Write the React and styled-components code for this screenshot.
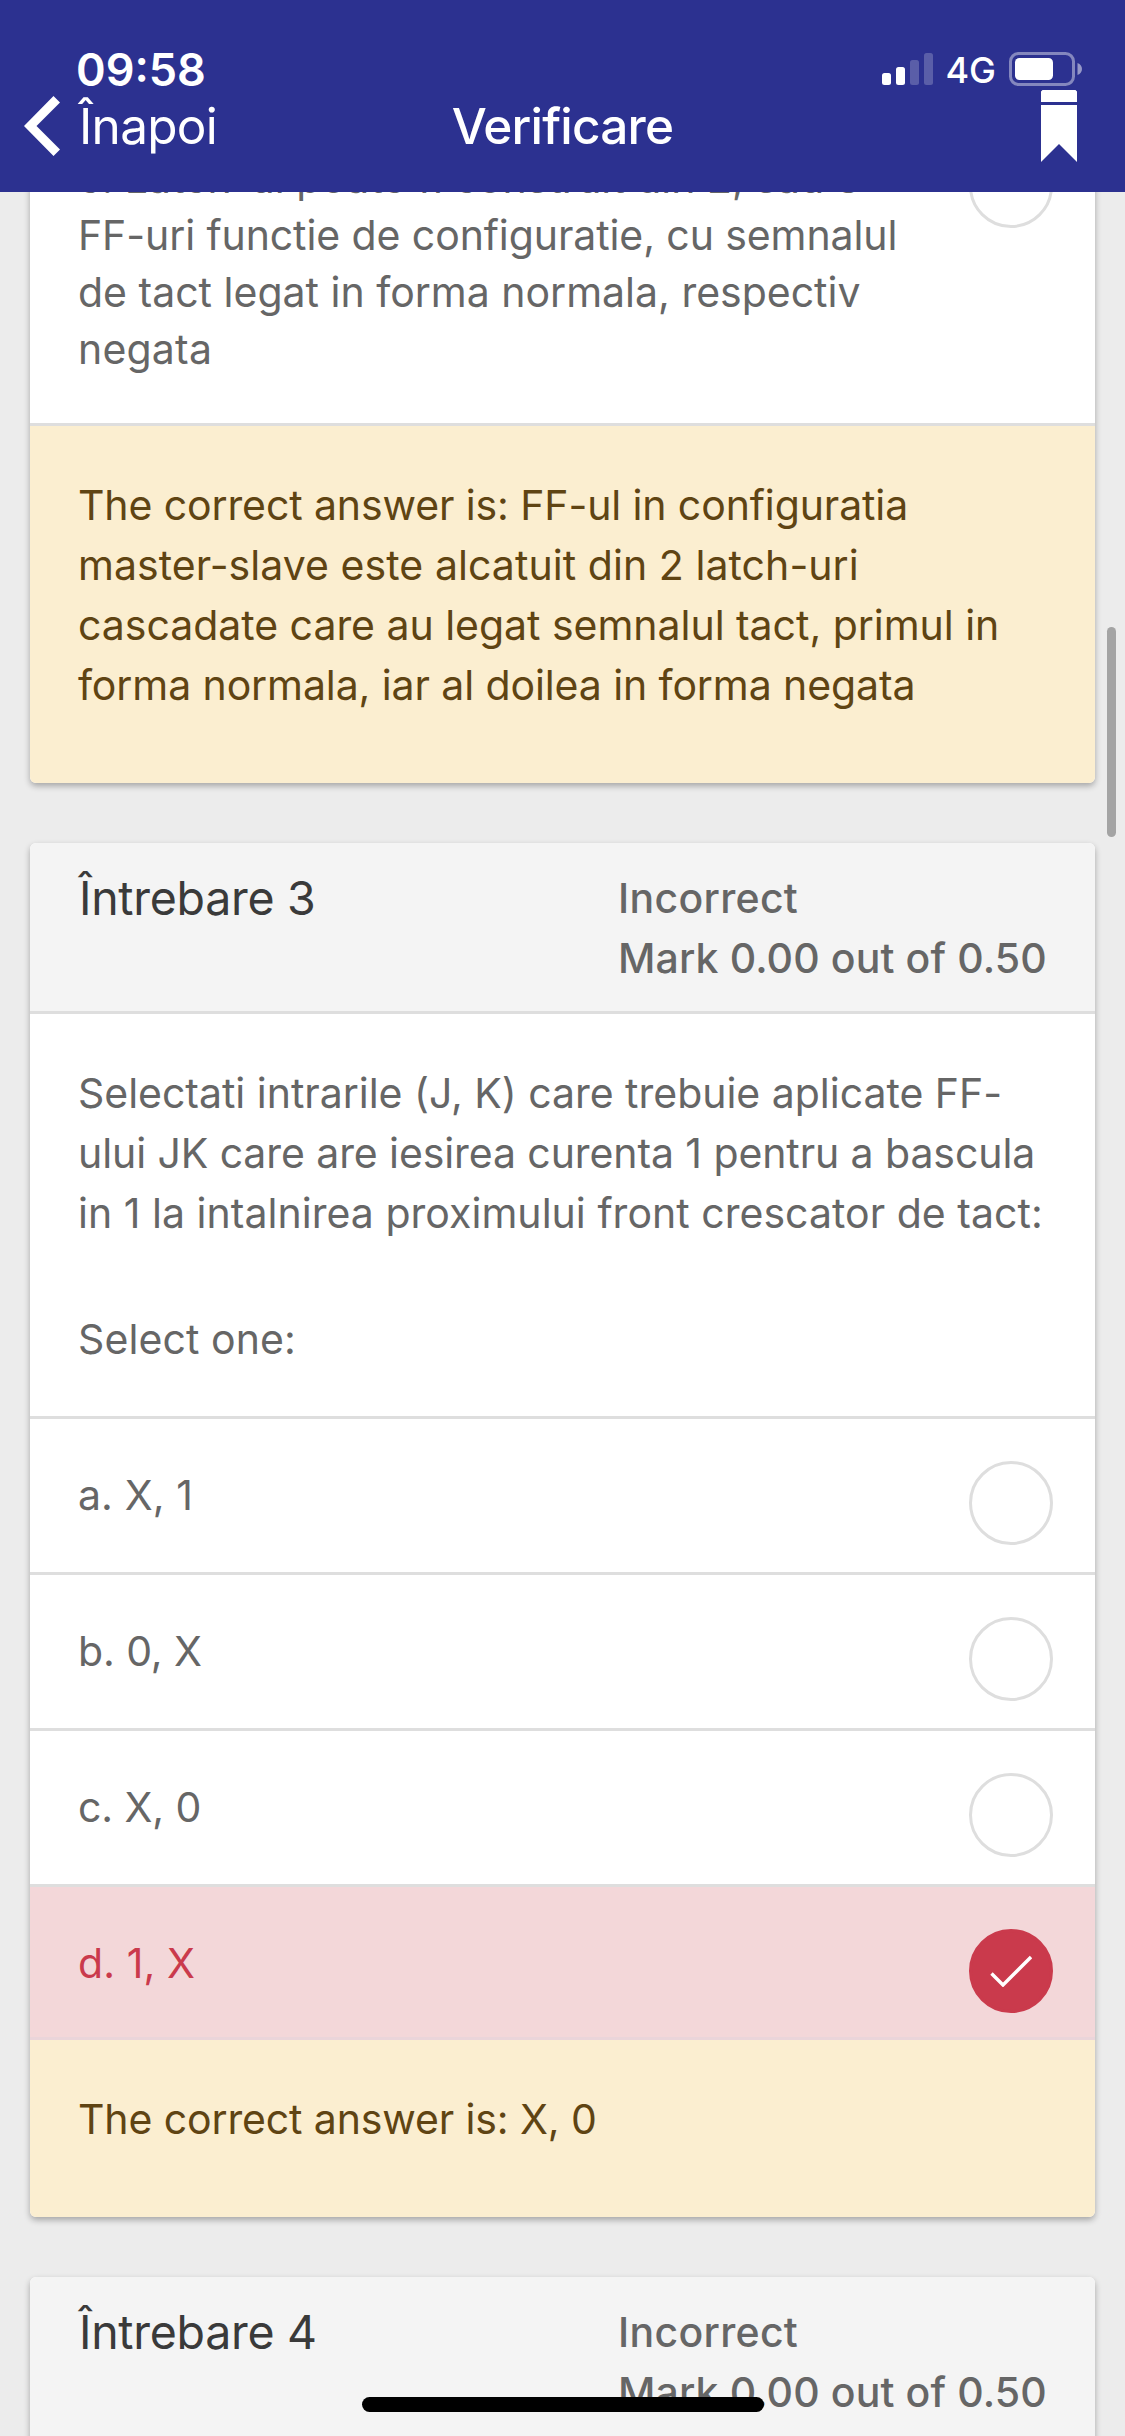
import React from 'react';
import styled, { createGlobalStyle } from 'styled-components';

const GlobalStyle = createGlobalStyle`
  * { box-sizing: border-box; }
  body {
    margin: 0;
    background: #ececec;
    font-family: Inter, 'Liberation Sans', sans-serif;
  }
`;

const Screen = styled.div`
  position: relative;
  display: flex;
  flex-direction: column;
  width: 1125px;
  height: 2436px;
  overflow: hidden;
  background: #ececec;
`;

const Header = styled.header`
  flex: none;
  height: 192px;
  background: #2c3190;
  color: #fff;
`;

const StatusBar = styled.div`
  display: flex;
  justify-content: space-between;
  align-items: center;
  height: 90px;
  padding: 48px 43px 0 76px;
`;

const Clock = styled.span`
  padding-top: 2px;
  font-size: 45px;
  font-weight: 600;
  line-height: 42px;
`;

const Indicators = styled.div`
  display: flex;
  align-items: center;
`;

const Network = styled.span`
  margin-left: 12px;
  margin-right: 13px;
  padding-top: 3px;
  font-size: 36px;
  font-weight: 500;
  line-height: 39px;
`;

const NavBar = styled.nav`
  display: grid;
  grid-template-columns: 300px 1fr 300px;
  height: 102px;
  padding: 6px 48px 0 24px;
`;

const BackButton = styled.button`
  display: flex;
  gap: 19px;
  height: 60px;
  padding: 0;
  border: 0;
  background: none;
  color: inherit;
  font: 400 49.5px/60px Inter, 'Liberation Sans', sans-serif;
  letter-spacing: -0.7px;
`;

const Title = styled.h1`
  margin: 0;
  padding-left: 24px;
  font-size: 49.5px;
  font-weight: 550;
  line-height: 60px;
  letter-spacing: -0.8px;
  text-align: center;
`;

const BookmarkIcon = styled.svg`
  justify-self: end;
  margin-top: -6px;
`;

const Content = styled.main`
  flex: 1;
  display: flex;
  flex-direction: column;
  gap: 60px;
  min-height: 0;
  padding: 0 30px;
  overflow: hidden;
`;

const Card = styled.section`
  flex: none;
  border-radius: 6px;
  overflow: hidden;
  background: #fff;
  box-shadow: 0 3px 6px rgba(0, 0, 0, 0.3);
  margin-top: ${(p) => (p.$scrolled ? '-90px' : '0')};
`;

const CardHeader = styled.div`
  display: flex;
  justify-content: space-between;
  height: 171px;
  padding: 24px 48px 0;
  border-bottom: 3px solid #dedede;
  background: #f4f4f4;
`;

const QuestionTitle = styled.h2`
  margin: 1px 0 0 1px;
  color: #3a3a3a;
  font-size: 46.5px;
  font-weight: 400;
  line-height: 60px;
  letter-spacing: -0.3px;
`;

const Marks = styled.div`
  width: 429px;
  padding-top: 1px;
  color: #666;
  font-weight: 500;
`;

const Prompt = styled.div`
  display: flex;
  flex-direction: column;
  gap: 66px;
  padding: 49px 48px 47px;
  border-bottom: 3px solid #dedede;
  color: #666;
`;

const Line = styled.div`
  font-size: 41px;
  line-height: ${(p) => p.$height || 60}px;
  letter-spacing: ${(p) => p.$tracking || 0}px;
  white-space: nowrap;
`;

const Option = styled.div`
  display: flex;
  justify-content: space-between;
  min-height: ${(p) => (p.$wrong ? 153 : 156)}px;
  padding: 0 42px 0 48px;
  border-bottom: 3px solid ${(p) => (p.$wrong ? '#ead5da' : '#dedede')};
  background: ${(p) => (p.$wrong ? '#f3d7d9' : '#fff')};
  color: ${(p) => (p.$wrong ? '#ca3a4c' : '#666')};
`;

const OptionText = styled.div`
  padding: 48px 0 45px;
`;

const Radio = styled.span`
  display: flex;
  align-items: center;
  justify-content: center;
  flex: none;
  width: 84px;
  height: 84px;
  margin-top: 42px;
  border: 3px solid ${(p) => (p.$checked ? '#ca3a4c' : '#dedede')};
  border-radius: 50%;
  background: ${(p) => (p.$checked ? '#ca3a4c' : '#fff')};
`;

const Feedback = styled.div`
  padding: 49px 48px 68px;
  background: #fbeed0;
  color: #5f4413;
`;

const ScrollThumb = styled.div`
  position: absolute;
  top: 627px;
  right: 9px;
  width: 9px;
  height: 210px;
  border-radius: 5px;
  background: #a4a4a4;
`;

const HomeIndicator = styled.div`
  position: absolute;
  bottom: 24px;
  left: 362px;
  width: 402px;
  height: 15px;
  border-radius: 8px;
  background: #000;
`;

const Signal = () => (
  <svg width="51" height="34" viewBox="0 0 51 34" fill="#fff">
    <rect x="0" y="21" width="9" height="12" rx="2.5" />
    <rect x="14" y="15" width="9" height="18" rx="2.5" />
    <rect x="28" y="8" width="9" height="25" rx="2.5" opacity=".22" />
    <rect x="42" y="1" width="9" height="32" rx="2.5" opacity=".22" />
  </svg>
);

const Battery = () => (
  <svg width="73" height="34" viewBox="0 0 73 34">
    <rect x="1.5" y="1.5" width="63" height="31" rx="8" fill="none" stroke="#fff" strokeOpacity=".42" strokeWidth="3" />
    <rect x="6" y="6" width="38" height="22" rx="4.5" fill="#fff" />
    <path d="M68.5 11 C74.5 13 74.5 21 68.5 23 Z" fill="#fff" opacity=".5" />
  </svg>
);

const Chevron = () => (
  <svg width="36" height="60" viewBox="0 0 36 60" fill="#fff">
    <path d="M29.5 0 L36 6.5 L12.5 30 L36 53.5 L29.5 60 L0 30 Z" />
  </svg>
);

const Check = () => (
  <svg width="42" height="32" viewBox="0 0 42 32" fill="none" stroke="#fff" strokeWidth="3.4">
    <path d="M1.5 18.5 L13 30 L41 2" strokeLinejoin="miter" />
  </svg>
);

const QuestionHeader = ({ number }) => (
  <CardHeader>
    <QuestionTitle>Întrebare {number}</QuestionTitle>
    <Marks>
      <Line $tracking={0.3}>Incorrect</Line>
      <Line $tracking={0.12}>Mark 0.00 out of 0.50</Line>
    </Marks>
  </CardHeader>
);

const Answer = ({ lines, wrong }) => (
  <Option $wrong={wrong}>
    <OptionText>
      {lines.map(([text, tracking]) => (
        <Line key={text} $height={57} $tracking={tracking}>{text}</Line>
      ))}
    </OptionText>
    <Radio $checked={wrong}>{wrong && <Check />}</Radio>
  </Option>
);

const previousAnswer = [
  ['c. Latch-ul poate fi construit din 2, sau 3', 0],
  ['FF-uri functie de configuratie, cu semnalul', -0.09],
  ['de tact legat in forma normala, respectiv', 0],
  ['negata', 0.2],
];

const previousFeedback = [
  ['The correct answer is: FF-ul in configuratia', -0.11],
  ['master-slave este alcatuit din 2 latch-uri', 0.06],
  ['cascadate care au legat semnalul tact, primul in', -0.03],
  ['forma normala, iar al doilea in forma negata', -0.1],
];

const question = [
  ['Selectati intrarile (J, K) care trebuie aplicate FF-', -0.02],
  ['ului JK care are iesirea curenta 1 pentru a bascula', -0.09],
  ['in 1 la intalnirea proximului front crescator de tact:', 0.03],
];

const answers = [
  { text: 'a. X, 1', tracking: 0.1 },
  { text: 'b. 0, X', tracking: -0.1 },
  { text: 'c. X, 0', tracking: -0.1 },
  { text: 'd. 1, X', tracking: 0.1, wrong: true },
];

export default function App() {
  return (
    <Screen>
      <GlobalStyle />
      <Header>
        <StatusBar>
          <Clock>09:58</Clock>
          <Indicators>
            <Signal />
            <Network>4G</Network>
            <Battery />
          </Indicators>
        </StatusBar>
        <NavBar>
          <BackButton>
            <Chevron />
            Înapoi
          </BackButton>
          <Title>Verificare</Title>
          <BookmarkIcon width="36" height="72" viewBox="0 0 36 72" fill="#fff">
            <path d="M1.5 0 H34.5 L36 1.5 V12 H0 V1.5 Z M0 15 H36 V72 L18 54 L0 72 Z" />
          </BookmarkIcon>
        </NavBar>
      </Header>

      <Content>
        <Card $scrolled>
          <Answer lines={previousAnswer} />
          <Feedback>
            {previousFeedback.map(([text, tracking]) => (
              <Line key={text} $tracking={tracking}>{text}</Line>
            ))}
          </Feedback>
        </Card>

        <Card>
          <QuestionHeader number={3} />
          <Prompt>
            <div>
              {question.map(([text, tracking]) => (
                <Line key={text} $tracking={tracking}>{text}</Line>
              ))}
            </div>
            <Line $tracking={0.1}>Select one:</Line>
          </Prompt>
          {answers.map(({ text, tracking, wrong }) => (
            <Answer key={text} lines={[[text, tracking]]} wrong={wrong} />
          ))}
          <Feedback>
            <Line $tracking={-0.12}>The correct answer is: X, 0</Line>
          </Feedback>
        </Card>

        <Card>
          <QuestionHeader number={4} />
        </Card>
      </Content>

      <ScrollThumb />
      <HomeIndicator />
    </Screen>
  );
}
